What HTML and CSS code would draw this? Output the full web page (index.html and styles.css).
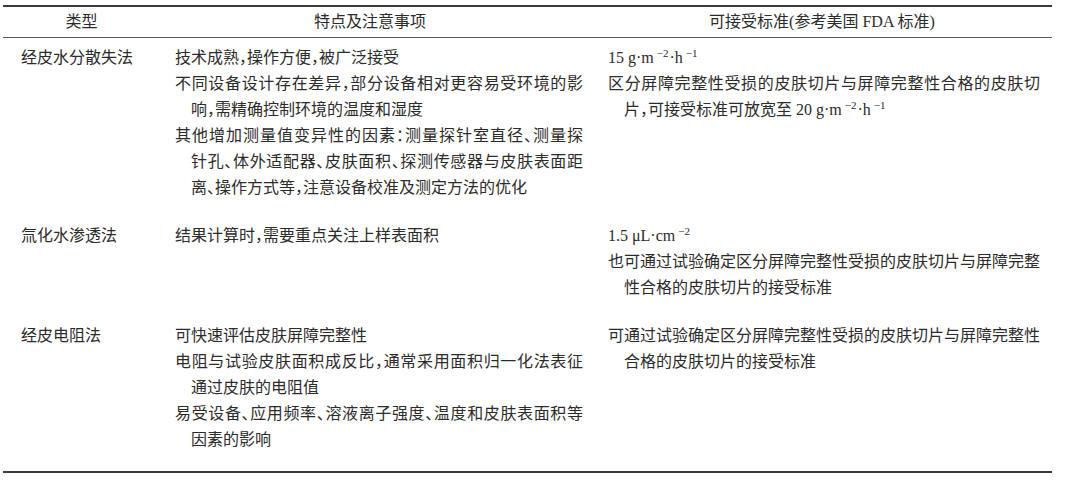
FILE: index.html
```html
<!DOCTYPE html>
<html lang="zh-CN">
<head>
<meta charset="utf-8">
<title>皮肤屏障完整性检测方法</title>
<link rel="stylesheet" href="styles.css">
</head>
<body>
<div class="table">
  <div class="th c1">类型</div>
  <div class="th c2 h2">特点及注意事项</div>
  <div class="th c3">可接受标准(参考美国 FDA 标准)</div>

  <div class="td c1">经皮水分散失法</div>
  <div class="td c2">
    <p class="item"><span class="ln">技术成熟，操作方便，被广泛接受</span></p>
    <p class="item"><span class="ln j">不同设备设计存在差异，部分设备相对更容易受环境的影</span><span class="ln in">响，需精确控制环境的温度和湿度</span></p>
    <p class="item"><span class="ln j">其他增加测量值变异性的因素：测量探针室直径、测量探</span><span class="ln in j">针孔、体外适配器、皮肤面积、探测传感器与皮肤表面距</span><span class="ln in">离、操作方式等，注意设备校准及测定方法的优化</span></p>
  </div>
  <div class="td c3">
    <p class="item"><span class="ln">15 g·m<sup>−2</sup>·h<sup>−1</sup></span></p>
    <p class="item"><span class="ln j">区分屏障完整性受损的皮肤切片与屏障完整性合格的皮肤切</span><span class="ln in">片，可接受标准可放宽至 20 g·m<sup>−2</sup>·h<sup>−1</sup></span></p>
  </div>

  <div class="td c1">氚化水渗透法</div>
  <div class="td c2">
    <p class="item"><span class="ln">结果计算时，需要重点关注上样表面积</span></p>
  </div>
  <div class="td c3">
    <p class="item"><span class="ln">1.5 μL·cm<sup>−2</sup></span></p>
    <p class="item"><span class="ln j">也可通过试验确定区分屏障完整性受损的皮肤切片与屏障完整</span><span class="ln in">性合格的皮肤切片的接受标准</span></p>
  </div>

  <div class="td c1 last">经皮电阻法</div>
  <div class="td c2 last">
    <p class="item"><span class="ln">可快速评估皮肤屏障完整性</span></p>
    <p class="item"><span class="ln j">电阻与试验皮肤面积成反比，通常采用面积归一化法表征</span><span class="ln in">通过皮肤的电阻值</span></p>
    <p class="item"><span class="ln j">易受设备、应用频率、溶液离子强度、温度和皮肤表面积等</span><span class="ln in">因素的影响</span></p>
  </div>
  <div class="td c3 last">
    <p class="item"><span class="ln">可通过试验确定区分屏障完整性受损的皮肤切片与屏障完整性</span><span class="ln in">合格的皮肤切片的接受标准</span></p>
  </div>
</div>
</body>
</html>
```

FILE: styles.css
```css
html, body {
  margin: 0;
  padding: 0;
  background: #ffffff;
}

body {
  color: #2b2b2b;
  font-family: "Liberation Serif", "Noto Sans CJK SC", serif;
  font-size: 16px;
  font-feature-settings: "halt";
}

.table {
  display: grid;
  grid-template-columns: 157px 432px 460px;
  width: 1049px;
  margin: 5px 0 0 3px;
  border-top: 2px solid #3a3a3a;
  border-bottom: 2px solid #3a3a3a;
}

.th {
  height: 30px;
  line-height: 30px;
  text-align: center;
  border-bottom: 1px solid #5a5a5a;
  white-space: nowrap;
}

.th.h2 {
  padding-right: 12px;
}

.td {
  padding-top: 7px;
  padding-bottom: 15px;
  line-height: 26px;
}

.td.last {
  padding-bottom: 18px;
}

.td.c1 {
  padding-left: 18px;
}

.td.c2 {
  padding-left: 15px;
  padding-right: 9px;
}

.td.c3 {
  padding-left: 16px;
  padding-right: 12px;
}

.item {
  margin: 0;
}

.ln {
  display: block;
  height: 26px;
  line-height: 26px;
  white-space: nowrap;
}

.ln.j {
  white-space: normal;
  text-align: justify;
  text-align-last: justify;
}

.ln.in {
  padding-left: 16px;
}

sup {
  font-size: 11px;
  line-height: 0;
  vertical-align: 6px;
  margin-left: 3px;
  margin-right: 1px;
}
```
